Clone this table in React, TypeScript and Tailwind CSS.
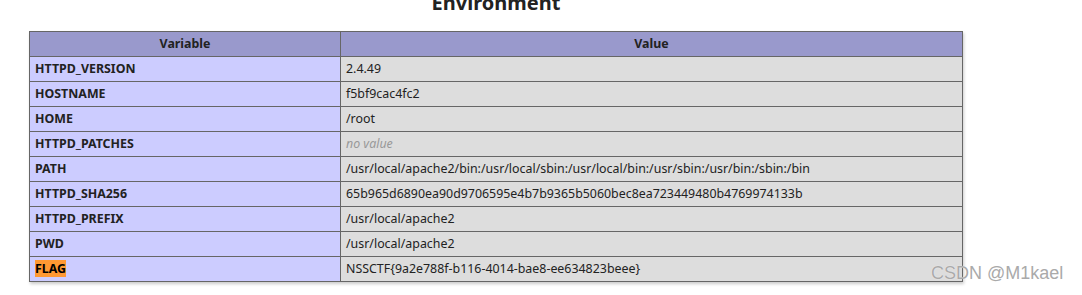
import React from "react";

const rows: [string, React.ReactNode][] = [
  ["HTTPD_VERSION", "2.4.49"],
  ["HOSTNAME", "f5bf9cac4fc2"],
  ["HOME", "/root"],
  ["HTTPD_PATCHES", <i className="text-[#999]">no value</i>],
  ["PATH", "/usr/local/apache2/bin:/usr/local/sbin:/usr/local/bin:/usr/sbin:/usr/bin:/sbin:/bin"],
  ["HTTPD_SHA256", "65b965d6890ea90d9706595e4b7b9365b5060bec8ea723449480b4769974133b"],
  ["HTTPD_PREFIX", "/usr/local/apache2"],
  ["PWD", "/usr/local/apache2"],
];

export default function App() {
  return (
    <div
      className="relative w-[1082px] h-[295px] bg-white overflow-hidden text-[#222]"
      style={{ fontFamily: '"Noto Sans", "Open Sans", sans-serif' }}
    >
      <div className="w-[934px] ml-[29px]">
        <h2 className="text-center text-[20px] font-bold leading-[24px] -mt-[9px] h-[40px] text-[#222]">
          Environment
        </h2>
        <table className="w-[934px] border-collapse border border-[#666] text-[12.4px] shadow-[1px_2px_3px_#ccc] table-fixed">
          <colgroup>
            <col className="w-[311px]" />
            <col />
          </colgroup>
          <thead>
            <tr className="h-[25px] bg-[#9999cc]">
              <th className="border border-[#666] font-bold px-[5px] pt-[1px] pb-0 text-center">Variable</th>
              <th className="border border-[#666] font-bold px-[5px] pt-[1px] pb-0 text-center">Value</th>
            </tr>
          </thead>
          <tbody>
            {rows.map(([k, v]) => (
              <tr key={k} className="h-[25px]">
                <td className="border border-[#666] bg-[#ccccff] font-bold px-[5px] pt-[1px] pb-0 whitespace-nowrap">{k}</td>
                <td className="border border-[#666] bg-[#dddddd] px-[5px] pt-[1px] pb-0 whitespace-nowrap">{v}</td>
              </tr>
            ))}
            <tr className="h-[25px]">
              <td className="border border-[#666] bg-[#ccccff] font-bold px-[5px] pt-[1px] pb-0">
                <span className="bg-[#ff9933] text-black">FLAG</span>
              </td>
              <td className="border border-[#666] bg-[#dddddd] px-[5px] pt-[1px] pb-0 whitespace-nowrap">
                NSSCTF{"{"}9a2e788f-b116-4014-bae8-ee634823beee{"}"}
              </td>
            </tr>
          </tbody>
        </table>
      </div>
      <div
        className="absolute left-[931px] top-[262px] text-[18px] leading-[22px] text-[#aaaaaa] [text-shadow:0_0_1px_#fff]"
        style={{ fontFamily: '"Liberation Sans", Arial, sans-serif' }}
      >
        CSDN @M1kael
      </div>
    </div>
  );
}
